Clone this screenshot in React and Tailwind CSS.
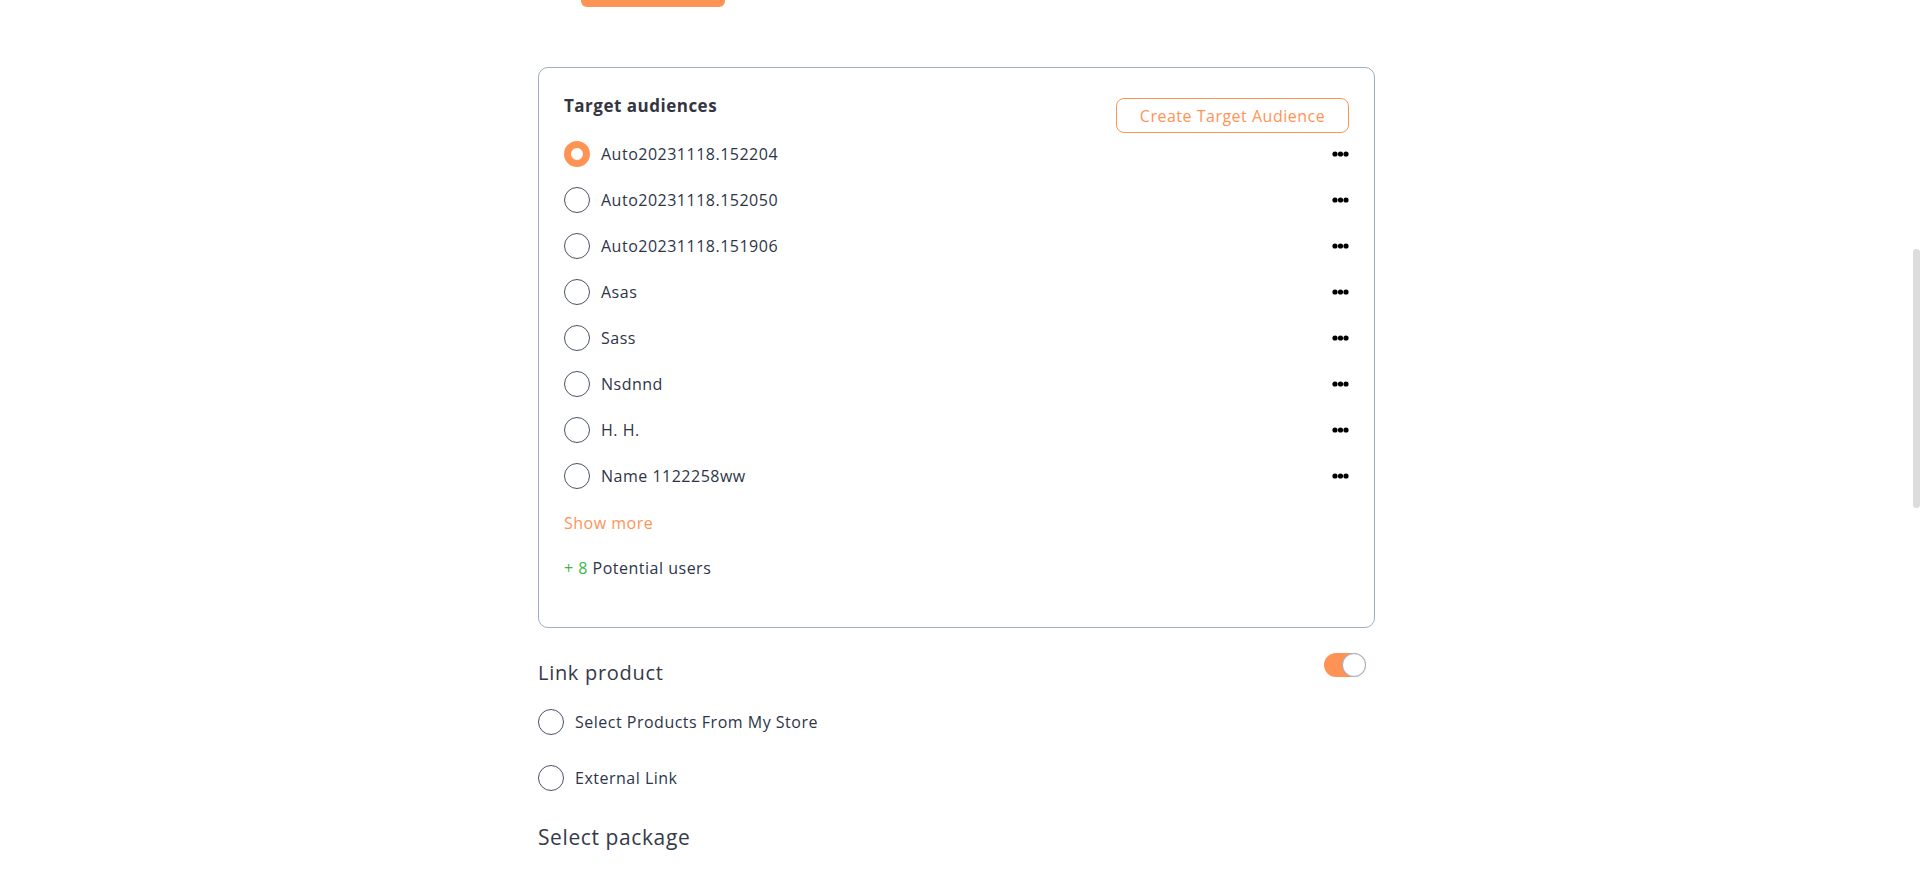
import React, { useState } from "react";

const AUDIENCES = [
  "Auto20231118.152204",
  "Auto20231118.152050",
  "Auto20231118.151906",
  "Asas",
  "Sass",
  "Nsdnnd",
  "H. H.",
  "Name 1122258ww",
];

const Radio = ({ checked }) => (
  <span
    className={`box-border block h-[26px] w-[26px] shrink-0 rounded-full ${
      checked ? "border-[7px] border-[#ff9356] bg-white" : "border border-[#4b5265] bg-white"
    }`}
  />
);

const Dots = () => (
  <svg width="17" height="6" viewBox="0 0 17 6" className="shrink-0">
    <circle cx="3" cy="3" r="2.6" fill="#000" />
    <circle cx="8.5" cy="3" r="2.6" fill="#000" />
    <circle cx="14" cy="3" r="2.6" fill="#000" />
  </svg>
);

const App = () => {
  const [selected, setSelected] = useState(0);
  const [linkOn, setLinkOn] = useState(true);
  const [linkType, setLinkType] = useState(null);

  return (
    <div
      className="h-screen overflow-hidden bg-white pr-[7px] tracking-[0.5px] text-[#2e3548]"
      style={{ fontFamily: '"Open Sans", "Noto Sans", sans-serif' }}
    >
      <main className="mx-auto w-[837px]">
        <button
          type="button"
          className="ml-[43px] -mt-[37px] block h-[44px] w-[144px] rounded-md bg-[#ff9356]"
        />

        <section className="mt-[60px] rounded-[10px] border border-[#9eadc4] px-[25px] pt-[26px] pb-[47px]">
          <div className="flex items-start justify-between">
            <h2 className="text-[17px] font-bold leading-6 text-[#333641]">Target audiences</h2>
            <button
              type="button"
              className="mt-[4px] h-[35px] w-[233px] rounded-lg border border-[#ff9356] text-[16px] leading-none text-[#ff9356]"
            >
              Create Target Audience
            </button>
          </div>

          <ul className="mt-[7px] flex flex-col gap-[19px]">
            {AUDIENCES.map((name, i) => (
              <li key={name} className="flex h-[27px] items-center justify-between">
                <button type="button" onClick={() => setSelected(i)} className="flex items-center gap-[11px]">
                  <Radio checked={selected === i} />
                  <span className="text-[16px] leading-6">{name}</span>
                </button>
                <Dots />
              </li>
            ))}
          </ul>

          <button type="button" className="mt-[22px] block text-[16px] leading-6 text-[#ff9356]">
            Show more
          </button>
          <p className="mt-[21px] text-[16px] leading-6">
            <span className="text-[#3cb44b]">+ 8</span> Potential users
          </p>
        </section>

        <div className="mt-[25px] flex items-start justify-between">
          <h3 className="mt-[6px] text-[20px] leading-7 tracking-[0.7px] text-[#353a49]">Link product</h3>
          <button
            type="button"
            onClick={() => setLinkOn(!linkOn)}
            className={`mr-[9px] flex h-[24px] w-[42px] items-center rounded-full ${
              linkOn ? "justify-end bg-[#ff9356]" : "justify-start bg-gray-300"
            }`}
          >
            <span className="box-border block h-[24px] w-[24px] rounded-full border border-[#9eadc4] bg-white" />
          </button>
        </div>

        <div className="mt-[21px] flex flex-col gap-[28px]">
          {["Select Products From My Store", "External Link"].map((label) => (
            <button
              key={label}
              type="button"
              onClick={() => setLinkType(label)}
              className="flex h-[28px] items-center gap-[11px]"
            >
              <Radio checked={linkType === label} />
              <span className="text-[16px] leading-6">{label}</span>
            </button>
          ))}
        </div>

        <h3 className="mt-[31px] text-[21px] leading-7 tracking-[0.6px] text-[#353a49]">Select package</h3>
      </main>

      <div className="fixed right-0 top-[249px] h-[259px] w-[7px] rounded-full bg-[#dcdcdc]" />
    </div>
  );
};

export default App;
